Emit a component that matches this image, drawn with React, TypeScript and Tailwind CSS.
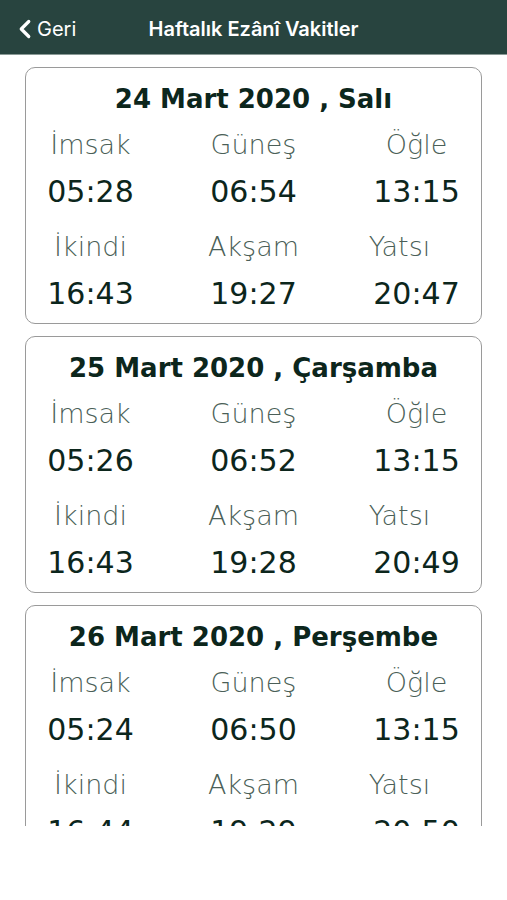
import { ChevronLeft } from "lucide-react";

type Day = {
  date: string;
  times: string[];
};

const days: Day[] = [
  { date: "24 Mart 2020 , Salı", times: ["05:28", "06:54", "13:15", "16:43", "19:27", "20:47"] },
  { date: "25 Mart 2020 , Çarşamba", times: ["05:26", "06:52", "13:15", "16:43", "19:28", "20:49"] },
  { date: "26 Mart 2020 , Perşembe", times: ["05:24", "06:50", "13:15", "16:44", "19:29", "20:50"] },
];

const labelsTop = ["İmsak", "Güneş", "Öğle"];
const labelsBottom = ["İkindi", "Akşam", "Yatsı"];

const DayCard = ({ day }: { day: Day }) => {
  return (
    <div className="border border-[#9a9a9a] rounded-[10px] px-[5px] pt-[14px] pb-[4px] bg-white">
      <h2 className="text-center text-[26px] leading-[34px] font-bold text-[#0c261c]">{day.date}</h2>

      {/* first row: İmsak / Güneş / Öğle */}
      <div className="grid grid-cols-3 gap-x-[44px] mt-[7px]">
        {labelsTop.map((l) => (
          <div key={l} className="text-center text-[27px] leading-[44px] font-light text-[#4b5f58]">{l}</div>
        ))}
        {day.times.slice(0, 3).map((t, i) => (
          <div key={i} className="text-center text-[30px] leading-[50px] text-[#0c261c]">{t}</div>
        ))}
      </div>

      {/* second row: İkindi / Akşam / Yatsı */}
      <div className="grid grid-cols-3 gap-x-[44px] mt-[8px]">
        {labelsBottom.map((l) => (
          <div
            key={l}
            className={`text-center text-[27px] leading-[44px] font-light text-[#4b5f58] ${l === "Yatsı" ? "pr-[34px]" : ""}`}
          >
            {l}
          </div>
        ))}
        {day.times.slice(3).map((t, i) => (
          <div key={i} className="text-center text-[30px] leading-[50px] text-[#0c261c]">{t}</div>
        ))}
      </div>
    </div>
  );
};

const App = () => {
  return (
    <div className="w-[507px] h-[900px] bg-white flex flex-col overflow-hidden" style={{ fontFamily: "'DejaVu Sans', sans-serif" }}>
      {/* Header */}
      <header className="relative h-[55px] shrink-0 bg-[#28443f] border-b border-[#8a9a96] flex items-center justify-center pt-[4px]">
        <button className="absolute left-[10px] top-0 h-full pt-[4px] flex items-center text-white font-['Inter',sans-serif]">
          <ChevronLeft size={30} strokeWidth={2.6} className="-mr-[3px]" />
          <span className="text-[20px]">Geri</span>
        </button>
        <h1 className="text-white text-[20px] font-semibold font-['Inter',sans-serif]">Haftalık Ezânî Vakitler</h1>
      </header>

      {/* List */}
      <div className="h-[771px] overflow-hidden px-[25px] pt-[12px] flex flex-col gap-[12px]">
        {days.map((d) => (
          <DayCard key={d.date} day={d} />
        ))}
      </div>
    </div>
  );
};

export default App;
